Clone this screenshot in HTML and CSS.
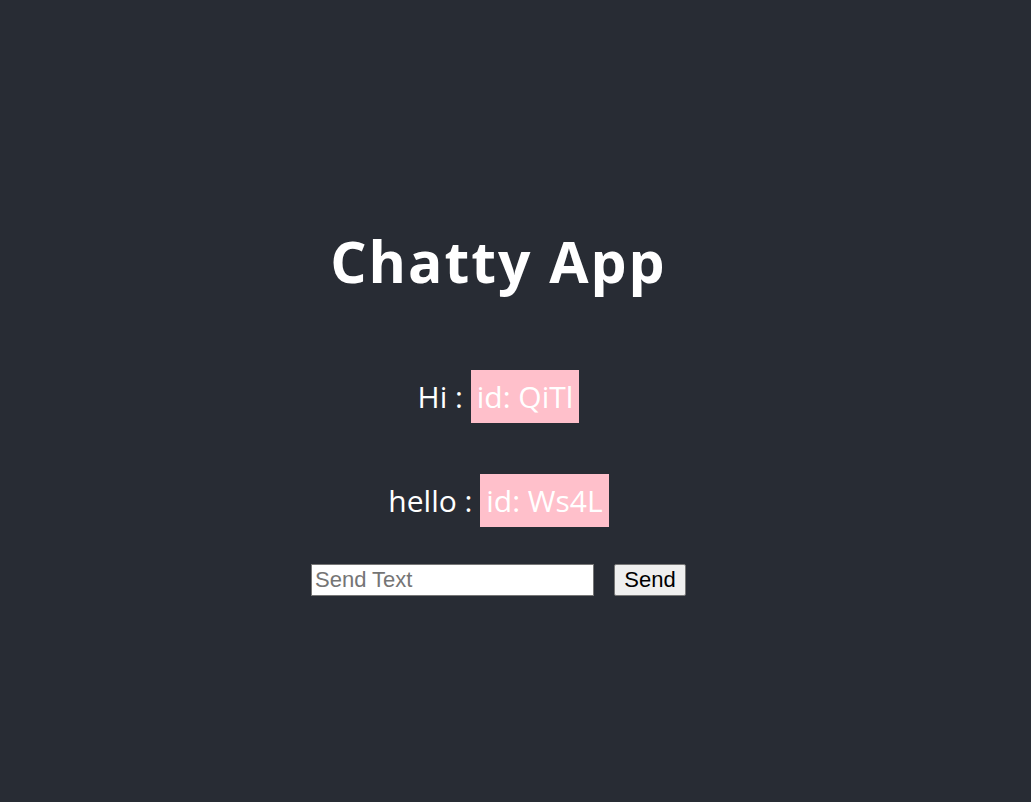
FILE: index.html
```html
<!DOCTYPE html>
<html>
<head>
<meta charset="utf-8">
<title>Chatty App</title>
<link rel="stylesheet" href="styles.css">
</head>
<body>
<div class="app">
  <h1 class="title">Chatty App</h1>
  <div class="messages">
    <div class="msg">Hi : <span class="tag">id: QiTl</span></div>
    <div class="msg">hello : <span class="tag">id: Ws4L</span></div>
  </div>
  <form class="composer">
    <input class="field" type="text" placeholder="Send Text">
    <button class="send" type="button">Send</button>
  </form>
</div>
</body>
</html>
```
FILE: styles.css
```css
html, body {
  margin: 0;
  padding: 0;
  height: 100%;
  background: #282c34;
}
.app {
  width: 997px;
  min-height: 100vh;
  box-sizing: border-box;
  padding-top: 223px;
  display: flex;
  flex-direction: column;
  align-items: center;
  color: #ffffff;
  font-family: "Open Sans", "Noto Sans", sans-serif;
}
.title {
  margin: 0;
  font-size: 57px;
  line-height: 76px;
  font-weight: 700;
  letter-spacing: 2px;
}
.messages {
  margin-top: 71px;
  display: flex;
  flex-direction: column;
  align-items: center;
  gap: 51px;
}
.msg {
  font-size: 30px;
  line-height: 53px;
  height: 53px;
}
.tag {
  display: inline-block;
  background: #ffc0cb;
  padding: 0 6px;
  line-height: 53px;
}
.composer {
  margin: 37px 0 0 0;
  display: flex;
  align-items: center;
  gap: 20px;
}
.field {
  box-sizing: border-box;
  width: 283px;
  height: 32px;
  border: 1px solid #767676;
  padding: 1px 3px;
  font-family: "Liberation Sans", Arial, sans-serif;
  font-size: 22px;
  background: #fff;
  color: #000;
  outline: none;
}
.field::placeholder {
  color: #757575;
}
.send {
  box-sizing: border-box;
  width: 72px;
  height: 32px;
  border: 1px solid #767676;
  border-radius: 2px;
  background: #efefef;
  color: #000;
  font-family: "Liberation Sans", Arial, sans-serif;
  font-size: 22px;
  padding: 0;
}
```
